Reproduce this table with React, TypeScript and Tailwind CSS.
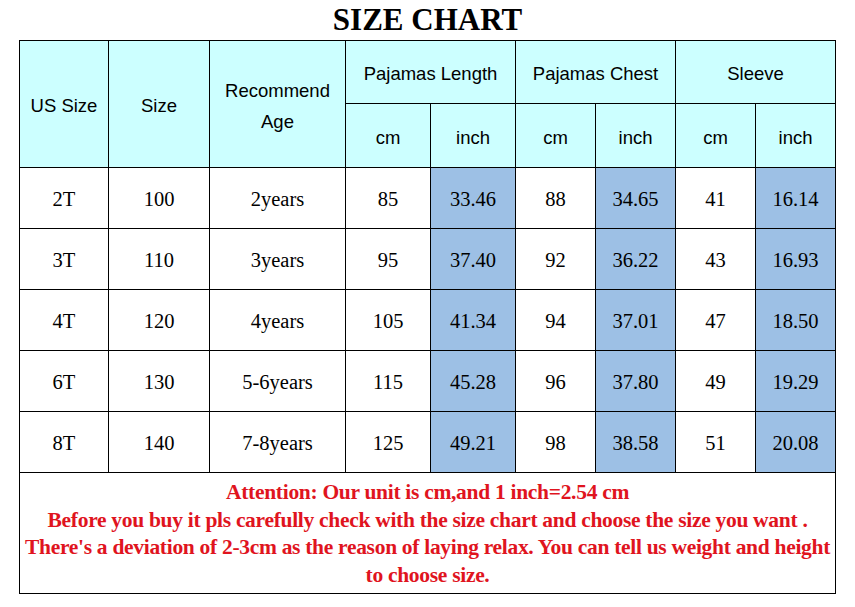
const rows = [
  ["2T", "100", "2years", "85", "33.46", "88", "34.65", "41", "16.14"],
  ["3T", "110", "3years", "95", "37.40", "92", "36.22", "43", "16.93"],
  ["4T", "120", "4years", "105", "41.34", "94", "37.01", "47", "18.50"],
  ["6T", "130", "5-6years", "115", "45.28", "96", "37.80", "49", "19.29"],
  ["8T", "140", "7-8years", "125", "49.21", "98", "38.58", "51", "20.08"],
];

const widths = [89, 101, 136, 85, 85, 80, 80, 80, 80];

const head = "border border-black bg-[#ccffff] pt-[4px] text-center align-middle font-['Liberation_Sans',Arial,sans-serif] text-[18.5px] font-normal text-black";
const cell = "border border-black pt-[3px] text-center align-middle font-['Liberation_Serif','Times_New_Roman',serif] text-[20.5px] text-black";

export default function App() {
  return (
    <div className="h-[607px] w-[855px] overflow-hidden bg-white">
      <h1 className="text-center font-['Liberation_Serif','Times_New_Roman',serif] text-[31px] font-bold leading-[40px] text-black">
        SIZE CHART
      </h1>
      <table className="ml-[19px] table-fixed border-collapse" style={{ width: 817 }}>
        <colgroup>
          {widths.map((w, i) => (
            <col key={i} style={{ width: w }} />
          ))}
        </colgroup>
        <thead>
          <tr className="h-[63px]">
            <th rowSpan={2} className={head}>US Size</th>
            <th rowSpan={2} className={head}>Size</th>
            <th rowSpan={2} className={`${head} leading-[31px]`}>
              Recommend
              <br />
              Age
            </th>
            <th colSpan={2} className={head}>Pajamas Length</th>
            <th colSpan={2} className={head}>Pajamas Chest</th>
            <th colSpan={2} className={head}>Sleeve</th>
          </tr>
          <tr className="h-[64px]">
            {["cm", "inch", "cm", "inch", "cm", "inch"].map((u, i) => (
              <th key={i} className={head}>{u}</th>
            ))}
          </tr>
        </thead>
        <tbody>
          {rows.map((r) => (
            <tr key={r[0]} className="h-[61px]">
              {r.map((v, i) => (
                <td
                  key={i}
                  className={`${cell} ${i === 4 || i === 6 || i === 8 ? "bg-[#9dc0e5]" : "bg-white"}`}
                >
                  {v}
                </td>
              ))}
            </tr>
          ))}
          <tr className="h-[121px]">
            <td
              colSpan={9}
              className="border border-black px-1 pt-[2px] text-center align-middle font-['Liberation_Serif','Times_New_Roman',serif] text-[21.5px] font-bold leading-[27.5px] tracking-[-0.3px] text-[#e0141e]"
            >
              <p>Attention: Our unit is cm,and 1 inch=2.54 cm</p>
              <p>Before you buy it pls carefully check with the size chart and choose the size you want .</p>
              <p>
                There's a deviation of 2-3cm as the reason of laying relax. You can tell us weight and height
                <br />
                to choose size.
              </p>
            </td>
          </tr>
        </tbody>
      </table>
    </div>
  );
}
